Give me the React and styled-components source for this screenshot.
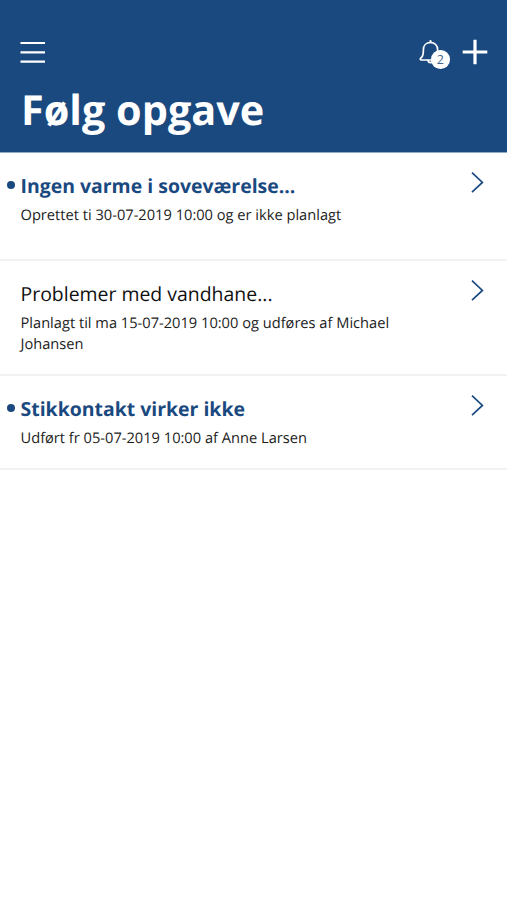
import styled, { createGlobalStyle } from 'styled-components'

const GlobalStyle = createGlobalStyle`
  body {
    margin: 0;
    background-color: #fff;
    font-family: 'Open Sans', 'Noto Sans', sans-serif;
    text-rendering: geometricPrecision;
  }
`;

const Page = styled.main`
  min-height: 100vh;
  background-color: #fff;
`;

const Header = styled.header`
  height: 153px;
  box-sizing: border-box;
  padding: 36px 19px 0 20px;
  border-bottom: 1px solid #8fabca;
  background-color: #1a4980;
  color: #fff;
`;

const Toolbar = styled.div`
  display: flex;
  align-items: center;
  justify-content: space-between;
  height: 32px;
`;

const Actions = styled.div`
  display: flex;
  align-items: center;
  gap: 12px;
`;

const IconButton = styled.button`
  display: flex;
  padding: 0;
  border: 0;
  background: none;
  color: inherit;
  cursor: pointer;
`;

const BellButton = styled(IconButton)`
  position: relative;
  width: 31px;
`;

const Badge = styled.span`
  position: absolute;
  top: 11px;
  left: 12px;
  width: 18.5px;
  height: 18.5px;
  border-radius: 50%;
  background-color: #fff;
  color: #3f6592;
  font-family: 'Open Sans', sans-serif;
  font-size: 12.5px;
  line-height: 19px;
  text-align: center;
`;

const Title = styled.h1`
  margin: 14px 0 0 1px;
  font-size: 41.4px;
  line-height: 56px;
  font-weight: 700;
  white-space: nowrap;
`;

const TaskList = styled.ul`
  margin: 0;
  padding: 0;
  list-style: none;
`;

const Task = styled.li`
  display: flex;
  align-items: flex-start;
  box-sizing: border-box;
  height: ${({ $height }) => $height}px;
  padding: 19px 23px 0 7px;
  border-bottom: 2px solid #f2f2f3;
`;

const Dot = styled.span`
  flex: none;
  width: 8px;
  height: 8px;
  margin: 9.4px 5.5px 0 0;
  border-radius: 50%;
  background-color: ${({ $unread }) => ($unread ? '#1a4980' : 'transparent')};
`;

const TaskText = styled.div`
  width: 400px;
`;

const TaskTitle = styled.h2`
  margin: 0;
  font-size: 19.45px;
  line-height: 28px;
  font-weight: ${({ $unread }) => ($unread ? 700 : 400)};
  color: ${({ $unread }) => ($unread ? '#1a4980' : '#111')};
`;

const TaskStatus = styled.p`
  margin: 5px 0 0;
  font-size: 14.65px;
  line-height: 21px;
  color: #1c1c1c;
`;

const Chevron = styled.svg`
  flex: none;
  margin: -1px 0 0 auto;
`;

const tasks = [
  {
    title: 'Ingen varme i soveværelse...',
    status: 'Oprettet ti 30-07-2019 10:00 og er ikke planlagt',
    unread: true,
    height: 108,
  },
  {
    title: 'Problemer med vandhane...',
    status: 'Planlagt til ma 15-07-2019 10:00 og udføres af Michael Johansen',
    unread: false,
    height: 115,
  },
  {
    title: 'Stikkontakt virker ikke',
    status: 'Udført fr 05-07-2019 10:00 af Anne Larsen',
    unread: true,
    height: 94,
  },
];

export default function App() {
  return (
    <Page>
      <GlobalStyle />
      <Header>
        <Toolbar>
          <IconButton aria-label="Menu">
            <svg width="26" height="24" viewBox="0 0 26 24" stroke="currentColor" strokeWidth="2.2">
              <path d="M.5 3h24.5M.5 12.3h24.5M.5 21.6h24.5" />
            </svg>
          </IconButton>
          <Actions>
            <BellButton aria-label="Notifikationer">
              <svg width="24" height="26" viewBox="0 0 24 26" fill="none" stroke="currentColor" strokeWidth="1.7" strokeLinejoin="round">
                <path d="M11.5 2v1.2" strokeWidth="2.2" strokeLinecap="round" />
                <path d="M11.5 3.5C7.2 3.5 4.4 6.5 4.4 10.7c0 5.6-.9 7.2-2.5 8.3-1 .8-.7 2 .4 2h18.4c1.1 0 1.4-1.2.4-2-1.6-1.1-2.5-2.7-2.5-8.3 0-4.2-2.8-7.2-7.1-7.2z" />
                <path d="M9 21c0 3.4 5 3.4 5 0" />
              </svg>
              <Badge>2</Badge>
            </BellButton>
            <IconButton aria-label="Ny opgave">
              <svg width="26" height="26" viewBox="0 0 26 26" stroke="currentColor" strokeWidth="3.2">
                <path d="M13 .7v24.6M.7 13h24.6" />
              </svg>
            </IconButton>
          </Actions>
        </Toolbar>
        <Title>Følg opgave</Title>
      </Header>
      <TaskList>
        {tasks.map((task) => (
          <Task key={task.title} $height={task.height}>
            <Dot $unread={task.unread} />
            <TaskText>
              <TaskTitle $unread={task.unread}>{task.title}</TaskTitle>
              <TaskStatus>{task.status}</TaskStatus>
            </TaskText>
            <Chevron width="13" height="22" viewBox="0 0 13 22" fill="none" stroke="#1a4980" strokeWidth="1.7">
              <path d="M1 1.7l10.4 9.7L1 21.1" />
            </Chevron>
          </Task>
        ))}
      </TaskList>
    </Page>
  )
}
